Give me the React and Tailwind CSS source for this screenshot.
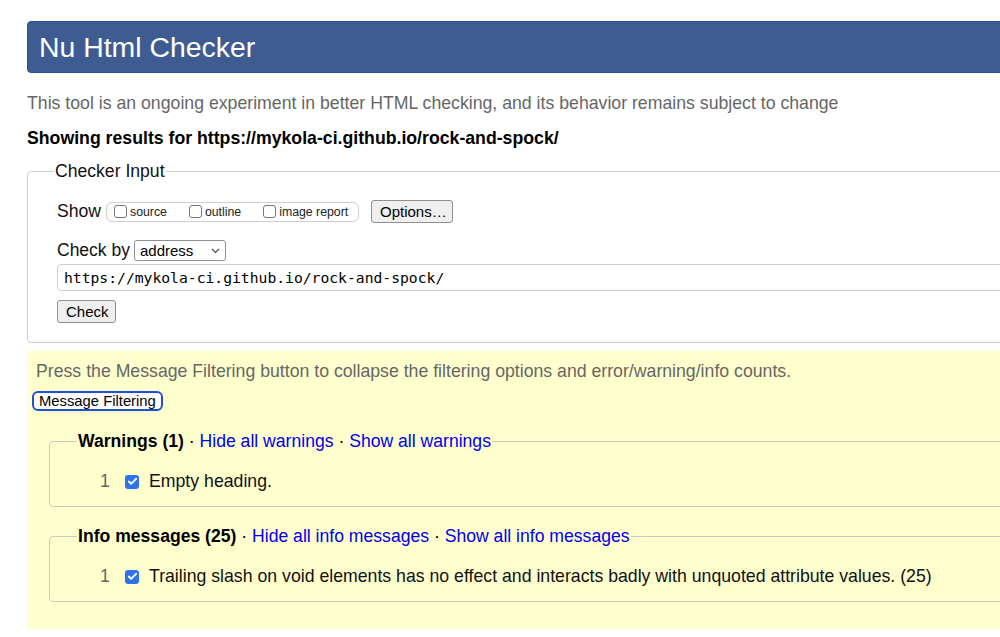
import { Check } from "lucide-react";

function Box({ checked }) {
  if (checked) {
    return (
      <span className="inline-flex h-[14px] w-[14px] shrink-0 items-center justify-center rounded-[3px] bg-[#2f72f0]">
        <Check size={11} strokeWidth={4} className="text-white" />
      </span>
    );
  }
  return (
    <span className="inline-block h-[13px] w-[13px] shrink-0 rounded-[3px] border border-[#767676] bg-white" />
  );
}

function ShowOption({ label }) {
  return (
    <label className="flex items-center gap-[3px]">
      <Box />
      <span className="text-[12.3px] leading-[14px] text-[#222]">{label}</span>
    </label>
  );
}

function Button({ children, className = "" }) {
  return (
    <button
      type="button"
      className={`rounded-[3px] border border-[#8f8f8f] bg-[#efefef] px-[8px] text-[15px] leading-[21px] text-black ${className}`}
    >
      {children}
    </button>
  );
}

function MessageGroup({ title, hide, show, text, className = "" }) {
  return (
    <fieldset className={`rounded-[4px] border border-[#c9c9c9] pb-[15px] pl-[27px] ${className}`}>
      <legend className="px-[1px] text-[17.6px] leading-[20px]">
        <span className="font-bold text-black">{title}</span>
        <span className="text-black"> · </span>
        <a className="text-[#0000ee]">{hide}</a>
        <span className="text-black"> · </span>
        <a className="text-[#0000ee]">{show}</a>
      </legend>
      <div className="mt-[20px] flex items-center text-[17.7px] leading-[20px]">
        <span className="w-[24px] pl-[23px] text-[#666]">1</span>
        <span className="ml-[24px]">
          <Box checked />
        </span>
        <span className="ml-[10px] text-[#111]">{text}</span>
      </div>
    </fieldset>
  );
}

export default function App() {
  return (
    <div className="h-[637px] w-[1000px] overflow-hidden bg-white font-['Liberation_Sans',Arial,sans-serif]">
      <div className="w-[1060px] pl-[27px] pt-[21px]">
        <header className="flex h-[52px] items-center rounded-l-[4px] border border-[#25529b] bg-[#3e5c91] pl-[11px]">
          <h1 className="text-[28.4px] leading-[32px] text-white">Nu Html Checker</h1>
        </header>

        <p className="mt-[21px] text-[17.7px] leading-[19px] text-[#666]">
          This tool is an ongoing experiment in better HTML checking, and its behavior remains subject to change
        </p>
        <p className="mt-[16px] text-[17.7px] font-bold leading-[19px] text-black">
          Showing results for https://mykola-ci.github.io/rock-and-spock/
        </p>

        <fieldset className="mt-[14px] rounded-[4px] border border-[#cfcfcf] pb-[18px] pl-[29px]">
          <legend className="-ml-[3px] px-[1px] text-[17.6px] leading-[19px] text-[#111]">Checker Input</legend>

          <div className="mt-[19px] flex items-center">
            <span className="text-[17.6px] leading-[19px] text-[#111]">Show</span>
            <div className="ml-[5px] flex h-[20px] w-[253px] items-center gap-[22px] rounded-[6px] border border-[#cfcfcf] pl-[7px]">
              <ShowOption label="source" />
              <ShowOption label="outline" />
              <ShowOption label="image report" />
            </div>
            <Button className="ml-[12px] h-[23px] w-[82px]">Options…</Button>
          </div>

          <div className="mt-[17px] flex items-center">
            <span className="text-[17.5px] leading-[19px] text-[#111]">Check by</span>
            <div className="ml-[4px] flex h-[21px] w-[92px] items-center justify-between rounded-[3px] border border-[#8f8f8f] bg-white pl-[5px] pr-[5px]">
              <span className="text-[15px] leading-[18px] text-black">address</span>
              <svg width="9" height="6" viewBox="0 0 9 6" fill="none">
                <path d="M1 1l3.5 3.5L8 1" stroke="#444" strokeWidth="1.1" />
              </svg>
            </div>
          </div>

          <div className="mt-[3px] flex h-[27px] items-center rounded-[4px] border border-[#cfcfcf] bg-white pl-[6px]">
            <span className="font-['DejaVu_Sans_Mono',monospace] text-[14.7px] leading-[18px] text-black">
              https://mykola-ci.github.io/rock-and-spock/
            </span>
          </div>

          <Button className="mt-[9px] h-[23px] w-[59px] px-0">Check</Button>
        </fieldset>

        <section className="mt-[8px] bg-[#ffffcd] pb-[27px] pt-[11px]">
          <p className="pl-[9px] text-[17.7px] leading-[19px] text-[#666]">
            Press the Message Filtering button to collapse the filtering options and error/warning/info counts.
          </p>
          <button
            type="button"
            className="ml-[5px] mt-[10px] h-[20px] rounded-[6px] border-2 border-[#1d4fd8] bg-white px-[5px] text-[14.8px] leading-[14px] text-black"
          >
            Message Filtering
          </button>

          <div className="pl-[22px]">
            <MessageGroup
              className="mt-[18px]"
              title="Warnings (1)"
              hide="Hide all warnings"
              show="Show all warnings"
              text="Empty heading."
            />
            <MessageGroup
              className="mt-[19px]"
              title="Info messages (25)"
              hide="Hide all info messages"
              show="Show all info messages"
              text="Trailing slash on void elements has no effect and interacts badly with unquoted attribute values. (25)"
            />
          </div>
        </section>
      </div>
    </div>
  );
}
